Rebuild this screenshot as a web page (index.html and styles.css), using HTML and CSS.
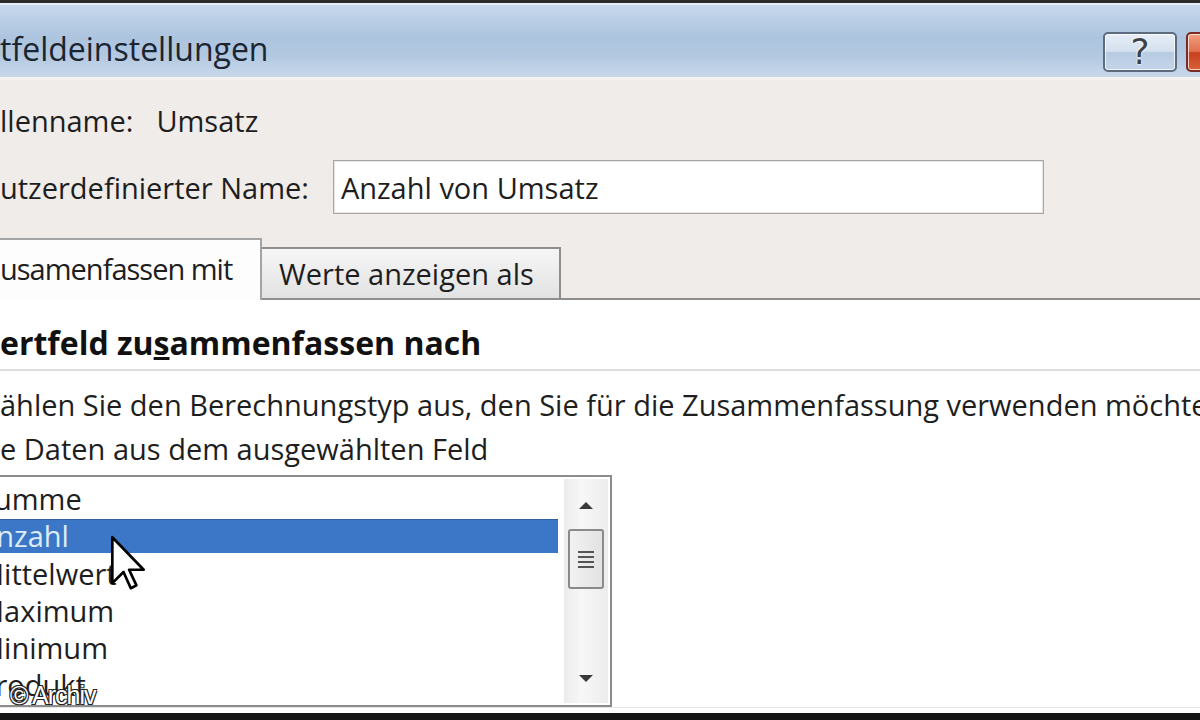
FILE: index.html
```html
<!DOCTYPE html>
<html lang="de">
<head>
  <meta charset="UTF-8">
  <title>Wertfeldeinstellungen</title>
  <link rel="stylesheet" href="styles.css">
</head>
<body>

  <div class="window">
    <!-- Title bar -->
    <div class="titlebar">
      <span class="title">tfeldeinstellungen</span>
      <div class="caption-buttons">
        <div class="cap-btn help">?</div>
        <div class="cap-btn close"></div>
      </div>
    </div>

    <!-- Field names -->
    <div class="dialog-body">
      <div class="field-row source">
        <span class="label">llenname:</span>
        <span class="value">Umsatz</span>
      </div>
      <div class="field-row custom">
        <span class="label">utzerdefinierter Name:</span>
        <div class="textbox">Anzahl von Umsatz</div>
      </div>

      <!-- Tabs -->
      <div class="tabs">
        <div class="tab active">usamenfassen mit</div>
        <div class="tab">Werte anzeigen als</div>
        <div class="tab-fill"></div>
      </div>
    </div>

    <!-- Tab page -->
    <div class="tab-page">
      <div class="group-title">ertfeld zu<u>s</u>ammenfassen nach</div>
      <div class="separator"></div>
      <p class="hint">ählen Sie den Berechnungstyp aus, den Sie für die Zusammenfassung verwenden möchten<br>e Daten aus dem ausgewählten Feld</p>

      <div class="listbox">
        <ul class="items">
          <li>Summe</li>
          <li class="selected">Anzahl</li>
          <li>Mittelwert</li>
          <li>Maximum</li>
          <li>Minimum</li>
          <li>Produkt</li>
        </ul>
        <div class="scrollbar">
          <svg class="arrow up" width="20" height="12" viewBox="0 0 20 12"><path d="M3 10 L10 3 L17 10 Z" fill="#3a3a3a"/></svg>
          <div class="thumb">
            <span></span><span></span><span></span><span></span>
          </div>
          <div class="track"></div>
          <svg class="arrow down" width="20" height="12" viewBox="0 0 20 12"><path d="M3 2 L10 9 L17 2 Z" fill="#3a3a3a"/></svg>
        </div>
      </div>
    </div>

    <div class="frame-bottom"></div>
  </div>

  <!-- Mouse pointer over the list -->
  <svg class="pointer" width="36" height="56" viewBox="0 0 32 50">
    <path d="M2 2 V43 L12 33 L18.5 47.5 L23.5 45 L17 31 H30 Z" fill="#fff" stroke="#000" stroke-width="2.4" stroke-linejoin="round"/>
  </svg>

  <div class="credit">© Archiv</div>

</body>
</html>
```

FILE: styles.css
```css
/* Page */
html, body {
  margin: 0;
  padding: 0;
}

body {
  width: 1200px;
  height: 720px;
  overflow: hidden;
  position: relative;
  font-family: "Open Sans", "DejaVu Sans", sans-serif;
  font-size: 29px;
  color: #1e1e1e;
  background: #f0ecea;
}

.window {
  height: 720px;
  display: flex;
  flex-direction: column;
  border-top: 3px solid #2c2c2c;
  box-sizing: border-box;
}

/* Title bar */
.titlebar {
  height: 77px;
  flex-shrink: 0;
  display: flex;
  align-items: center;
  justify-content: space-between;
  box-sizing: border-box;
  border-top: 2px solid #e6eef7;
  border-bottom: 3px solid #f4f1ee;
  background: linear-gradient(#c6d8ec, #adc4df 45%, #b2c8e1 70%, #c8d8ea);
}

.title {
  font-size: 32px;
  color: #1b2431;
  margin-top: 14px;
  white-space: nowrap;
}

.caption-buttons {
  display: flex;
  gap: 9px;
  margin-top: 22px;
  margin-right: -30px;
}

.cap-btn {
  width: 70px;
  height: 36px;
  border: 2px solid #5d6b7e;
  border-radius: 5px;
  box-shadow: inset 0 0 0 1px rgba(255, 255, 255, 0.7);
  display: flex;
  align-items: center;
  justify-content: center;
}

.cap-btn.help {
  background: linear-gradient(#e6eef7, #d4e0ee 48%, #b6cae2 52%, #c4d5ea);
  font-family: "DejaVu Sans", sans-serif;
  font-size: 36px;
  line-height: 36px;
  color: #3c424a;
  text-shadow: 0 0 2px #fff, 0 0 2px #fff, 0 0 1px #fff;
}

.cap-btn.close {
  width: 40px;
  border-color: #7b2c22;
  background: linear-gradient(#f0a080, #e0704f 48%, #c8401f 52%, #d8603a);
}

/* Dialog body */
.dialog-body {
  padding-top: 22px;
}

.field-row {
  display: flex;
  align-items: center;
  white-space: nowrap;
}

.field-row.source {
  height: 36px;
  gap: 23px;
}

.field-row.custom {
  margin-top: 22px;
  gap: 24px;
}

.textbox {
  width: 702px;
  height: 52px;
  box-sizing: content-box;
  border: 1px solid #a7a7a7;
  box-shadow: inset 0 0 0 1px #e4e4e4;
  background: #fff;
  display: flex;
  align-items: center;
  padding-left: 7px;
}

/* Tabs */
.tabs {
  display: flex;
  align-items: flex-end;
  margin-top: 24px;
  height: 62px;
}

.tab {
  height: 53px;
  box-sizing: border-box;
  padding: 0 25px 0 17px;
  display: flex;
  align-items: center;
  white-space: nowrap;
  border: 2px solid #8e8e8e;
  border-left: none;
  background: linear-gradient(#f6f6f6, #e2e2e2);
}

.tab.active {
  height: 62px;
  width: 262px;
  padding: 0 0 4px;
  letter-spacing: -1px;
  border-color: #a4a4a4;
  border-bottom: none;
  background: #fdfdfd;
}

.tab-fill {
  flex: 1;
  border-bottom: 2px solid #8e8e8e;
}

/* Tab page */
.tab-page {
  flex: 1;
  background: #fff;
  padding-top: 25px;
  display: flex;
  flex-direction: column;
}

.group-title {
  height: 36px;
  line-height: 36px;
  font-size: 32px;
  font-weight: bold;
  color: #111;
  white-space: nowrap;
}

.separator {
  height: 2px;
  margin-top: 8px;
  background: #dedede;
}

.hint {
  margin: 12px 0 0;
  line-height: 44px;
  white-space: nowrap;
}

/* List box */
.listbox {
  width: 644px;
  height: 232px;
  margin-top: 4px;
  margin-left: -32px;
  box-sizing: border-box;
  border: 2px solid #8c8c8c;
  background: #fff;
  display: flex;
}

.items {
  list-style: none;
  margin: 0;
  padding: 4px 0 0;
  flex: 1;
  overflow: hidden;
}

.items li {
  height: 37px;
  line-height: 36px;
  padding-left: 8px;
  white-space: nowrap;
}

.items li.selected {
  height: 33px;
  line-height: 32px;
  margin: 1px 6px 3px 0;
  background: #3c76c6;
  border-top: 1px solid #30609e;
  color: #dcecf8;
}

.scrollbar {
  width: 44px;
  margin: 2px 2px 2px 0;
  background: linear-gradient(90deg, #ececec, #f7f7f7 40%, #ececec);
  display: flex;
  flex-direction: column;
  align-items: center;
}

.scrollbar .arrow.up {
  margin: 20px 0 18px;
}

.scrollbar .arrow.down {
  margin: 10px 0 18px;
}

.thumb {
  width: 36px;
  height: 60px;
  box-sizing: border-box;
  border: 2px solid #8a8a8a;
  border-radius: 3px;
  background: linear-gradient(90deg, #f2f2f2, #e2e2e2);
  display: flex;
  flex-direction: column;
  align-items: center;
  justify-content: center;
  gap: 3px;
}

.thumb span {
  width: 16px;
  height: 2px;
  background: #555;
}

.track {
  flex: 1;
}

.frame-bottom {
  height: 13px;
  flex-shrink: 0;
  background: #fff;
  border-top: 1px solid #e6e6e6;
  border-bottom: 7px solid #151515;
  box-sizing: border-box;
}

/* Pointer and photo credit sit over the dialog */
.pointer {
  position: absolute;
  left: 110px;
  top: 535px;
}

.credit {
  position: absolute;
  left: 10px;
  top: 681px;
  font-family: "Liberation Sans", sans-serif;
  font-size: 25px;
  letter-spacing: -1px;
  color: #fff;
  text-shadow: -1px -1px 0 #222, 1px -1px 0 #222, -1px 1px 0 #222, 1px 1px 0 #222;
}
```
